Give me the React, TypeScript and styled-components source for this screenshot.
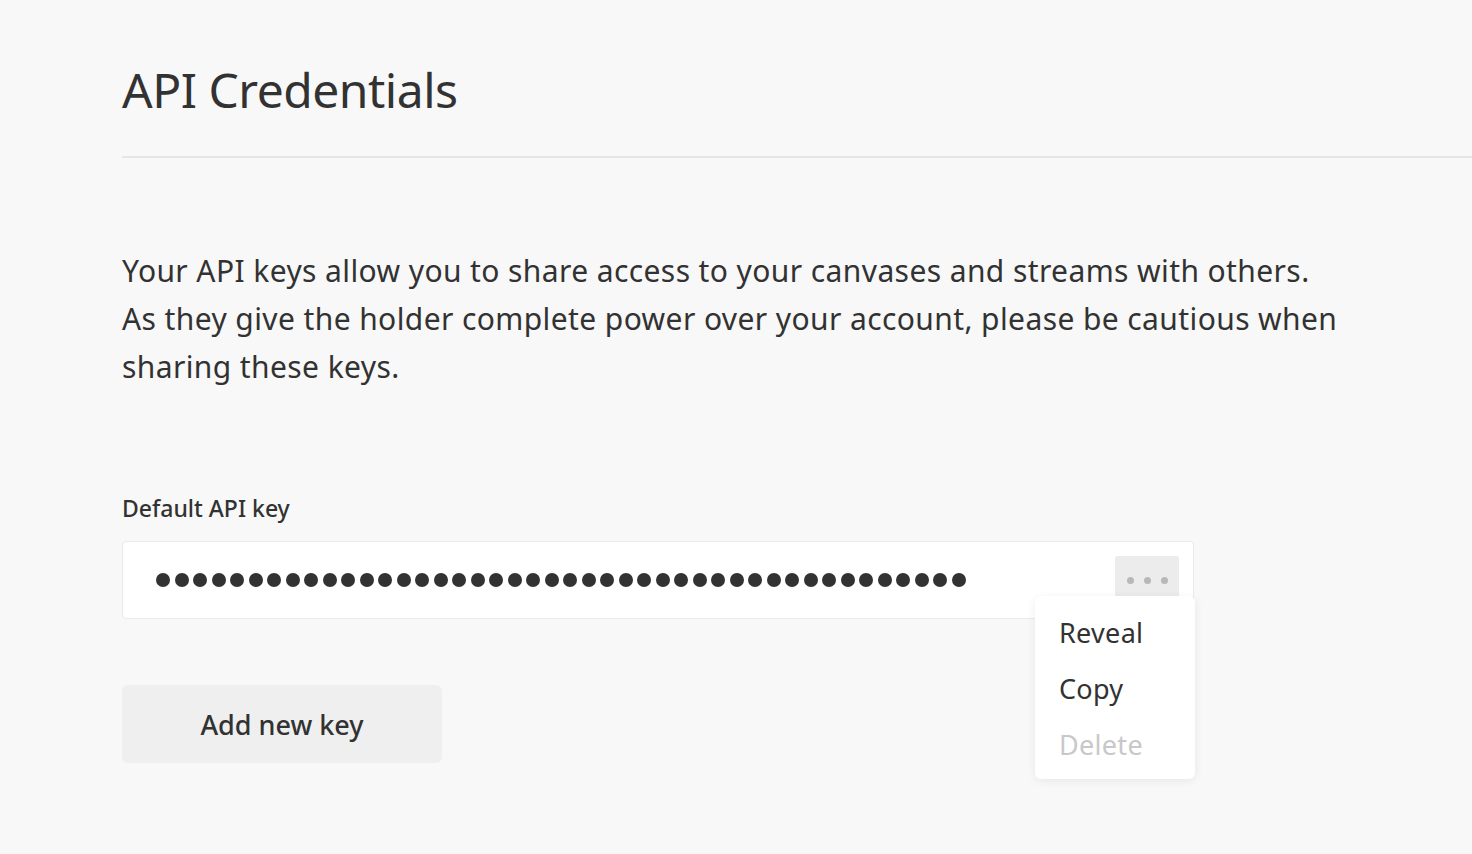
import React, { useState } from "react";
import styled, { createGlobalStyle } from "styled-components";

const GlobalStyle = createGlobalStyle`
  html, body {
    margin: 0;
    padding: 0;
    background: #f8f8f8;
  }
  body {
    font-family: "Noto Sans", "Open Sans", sans-serif;
    color: #323232;
  }
`;

const MENU_ITEMS = [
  { label: "Reveal", disabled: false },
  { label: "Copy", disabled: false },
  { label: "Delete", disabled: true },
];

const KEY_LENGTH = 44;

const App = () => {
  const [menuOpen, setMenuOpen] = useState(true);

  return (
    <Page>
      <GlobalStyle />
      <Header>
        <Title>API Credentials</Title>
      </Header>
      <Content>
        <Description>
          Your API keys allow you to share access to your canvases and streams
          with others. As they give the holder complete power over your
          account, please be cautious when sharing these keys.
        </Description>
        <Field>
          <Label>Default API key</Label>
          <KeyBox>
            <Dots>
              {Array.from({ length: KEY_LENGTH }).map((_, i) => (
                <Dot key={i} />
              ))}
            </Dots>
            <MoreButton onClick={() => setMenuOpen(!menuOpen)}>
              <MoreDot />
              <MoreDot />
              <MoreDot />
            </MoreButton>
            {menuOpen && (
              <Menu>
                {MENU_ITEMS.map((item) => (
                  <MenuItem key={item.label} disabled={item.disabled}>
                    {item.label}
                  </MenuItem>
                ))}
              </Menu>
            )}
          </KeyBox>
        </Field>
        <AddButton>Add new key</AddButton>
      </Content>
    </Page>
  );
};

export default App;

const Page = styled.div`
  min-height: 854px;
  padding-left: 122px;
  background: #f8f8f8;
`;

const Header = styled.div`
  padding: 60px 0 36px;
  border-bottom: 2px solid #e6e6e6;
`;

const Title = styled.h1`
  margin: 0;
  font-size: 48px;
  font-weight: 400;
  line-height: 60px;
  letter-spacing: -0.5px;
  color: #323232;
`;

const Content = styled.div`
  padding-top: 89px;
  width: 1072px;
`;

const Description = styled.p`
  margin: 0;
  width: 1222px;
  font-size: 30px;
  line-height: 48px;
  letter-spacing: 0.4px;
  color: #323232;
`;

const Field = styled.div`
  margin-top: 102px;
`;

const Label = styled.div`
  font-size: 23px;
  font-weight: 500;
  line-height: 30px;
  margin-bottom: 18px;
`;

const KeyBox = styled.div`
  position: relative;
  display: flex;
  align-items: center;
  justify-content: space-between;
  height: 78px;
  box-sizing: border-box;
  padding: 0 14px 0 33px;
  background: #ffffff;
  border: 1px solid #e9e9e9;
  border-radius: 4px;
`;

const Dots = styled.div`
  display: flex;
  gap: 4.5px;
`;

const Dot = styled.span`
  width: 14px;
  height: 14px;
  border-radius: 50%;
  background: #323232;
`;

const MoreButton = styled.button`
  display: flex;
  align-items: center;
  justify-content: center;
  gap: 10px;
  width: 64px;
  height: 48px;
  border: none;
  border-radius: 2px;
  background: #ececec;
  cursor: pointer;
  padding: 0;
`;

const MoreDot = styled.span`
  width: 7px;
  height: 7px;
  border-radius: 50%;
  background: #b8b8b8;
`;

const Menu = styled.div`
  position: absolute;
  top: 54px;
  right: -2px;
  width: 160px;
  padding: 8px 0 7px;
  background: #ffffff;
  border-radius: 6px;
  box-shadow: 0 2px 10px rgba(0, 0, 0, 0.07);
`;

const MenuItem = styled.div<{ disabled: boolean }>`
  height: 56px;
  display: flex;
  align-items: center;
  padding-left: 24px;
  font-size: 27px;
  letter-spacing: 0.3px;
  color: ${({ disabled }) => (disabled ? "#c8c8c8" : "#323232")};
  cursor: ${({ disabled }) => (disabled ? "default" : "pointer")};
`;

const AddButton = styled.button`
  margin-top: 66px;
  width: 320px;
  height: 78px;
  border: none;
  border-radius: 6px;
  background: #efefef;
  font-family: inherit;
  font-size: 27px;
  font-weight: 500;
  color: #323232;
  cursor: pointer;
`;
